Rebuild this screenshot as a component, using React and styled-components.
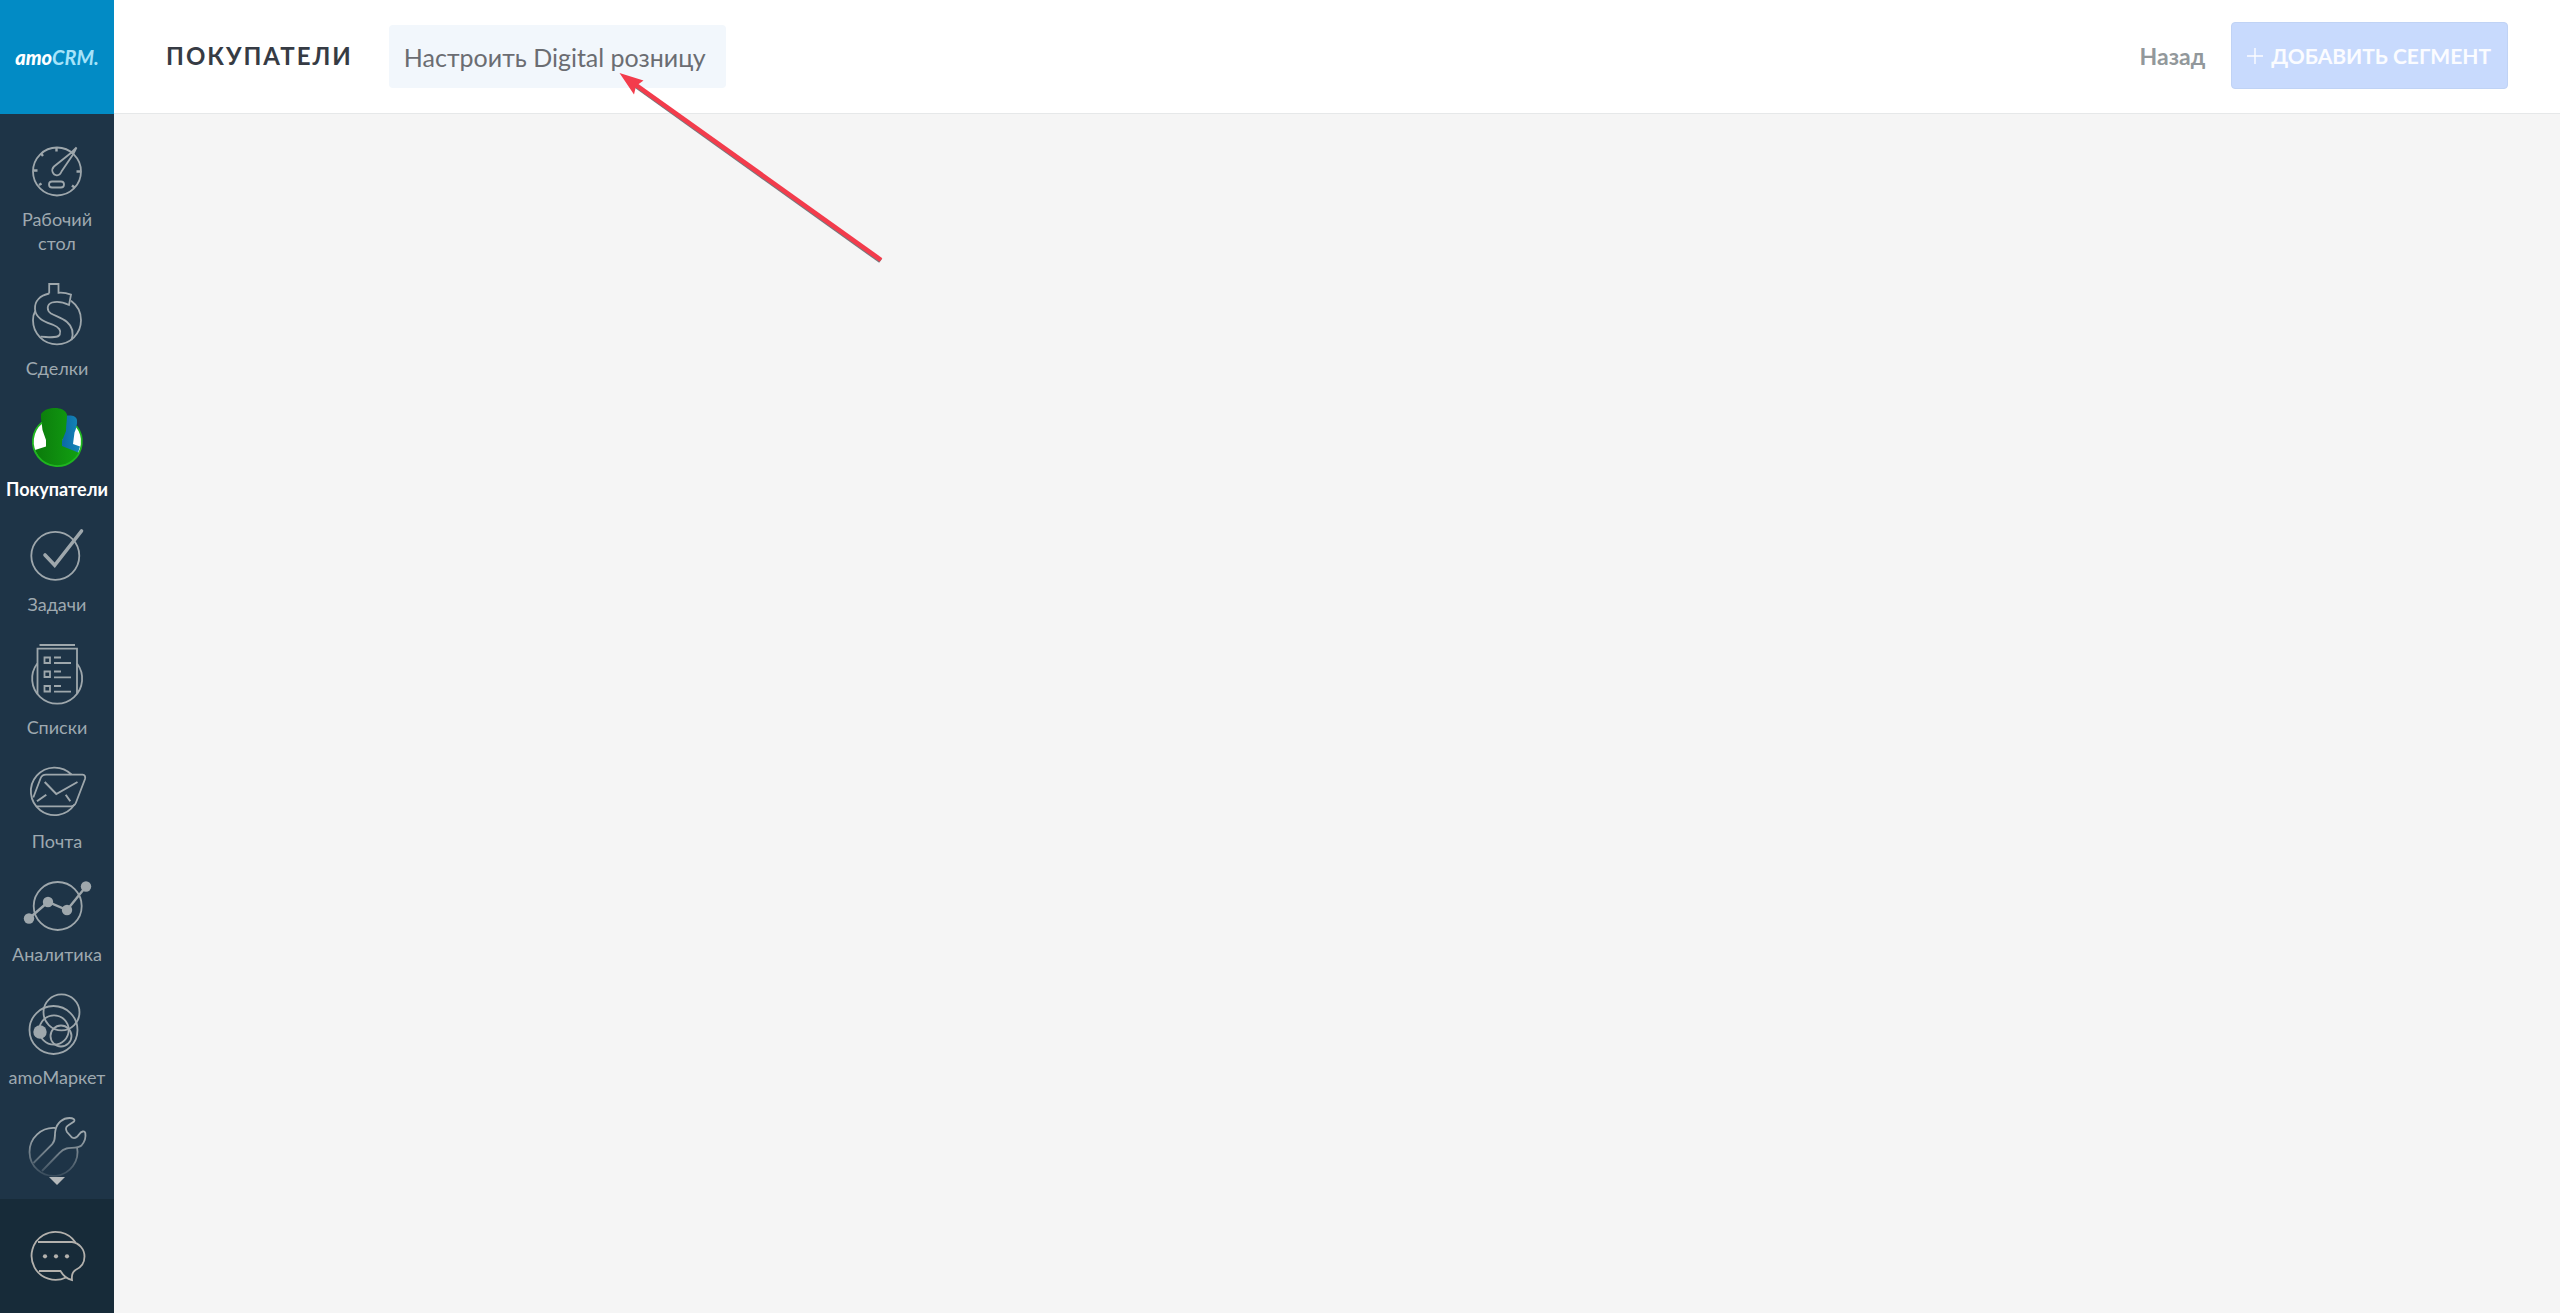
import React from "react";
import styled, { createGlobalStyle, css } from "styled-components";

const GlobalStyle = createGlobalStyle`
  *, *::before, *::after { box-sizing: border-box; }
  body {
    margin: 0;
    font-family: Lato, "Open Sans", sans-serif;
    background: #f5f5f5;
  }
`;

const Page = styled.div`
  display: flex;
  height: 100vh;
  overflow: hidden;
`;

const Sidebar = styled.aside`
  flex: none;
  display: flex;
  flex-direction: column;
  width: 114px;
  background: #1e3447;
`;

const Logo = styled.a`
  flex: none;
  display: flex;
  align-items: center;
  justify-content: center;
  height: 114px;
  background: #028bc5;
  color: #fff;
  font-size: 20px;
  line-height: 24px;
  font-weight: 900;
  font-style: italic;
  text-decoration: none;
`;

const LogoAccent = styled.span`
  color: #a5e3fa;
  font-weight: 700;
`;

const NavArea = styled.div`
  position: relative;
  flex: 1;
  min-height: 0;
  overflow: hidden;
`;

const Nav = styled.nav`
  display: flex;
  flex-direction: column;
  gap: 28px;
  padding-top: 32px;
`;

const NavItem = styled.a`
  display: flex;
  flex-direction: column;
  align-items: center;
  gap: 11px;
  color: #9ea9b0;
  font-size: 18px;
  line-height: 24px;
  text-align: center;
  text-decoration: none;
  ${(p) =>
    p.$active &&
    css`
      color: #fff;
      font-weight: 700;
    `}
`;

const Icon = styled.svg`
  display: block;
  flex: none;
  fill: none;
  stroke: ${(p) => p.$tone};
  stroke-width: 1.8;
`;

const NavFade = styled.div`
  position: absolute;
  inset: auto 0 0;
  display: flex;
  justify-content: center;
  align-items: flex-end;
  height: 64px;
  padding-bottom: 14px;
  background: linear-gradient(rgba(30, 52, 71, 0), #1e3447 80%);
`;

const MoreButton = styled.button`
  width: 16px;
  height: 8px;
  padding: 0;
  border: 0;
  background: #b5b9bb;
  clip-path: polygon(0 0, 100% 0, 50% 100%);
`;

const ChatButton = styled.button`
  flex: none;
  display: flex;
  align-items: center;
  justify-content: center;
  height: 114px;
  padding: 0;
  border: 0;
  background: #172b39;
`;

const Content = styled.div`
  flex: 1;
  min-width: 0;
  display: flex;
  flex-direction: column;
`;

const Header = styled.header`
  display: flex;
  align-items: center;
  height: 114px;
  padding: 0 52px;
  background: #fff;
  border-bottom: 1px solid #e6e8e9;
`;

const Title = styled.h1`
  margin: 0 36px 2px 0;
  color: #363b44;
  font-size: 24px;
  line-height: 32px;
  font-weight: 700;
  letter-spacing: 2px;
`;

const SetupButton = styled.button`
  height: 63px;
  padding: 0 20px 0 15px;
  border: 0;
  border-radius: 4px;
  background: #f2f7fc;
  color: #6b6d72;
  font-family: inherit;
  font-size: 25px;
  line-height: 32px;
`;

const Actions = styled.div`
  display: flex;
  align-items: center;
  gap: 26px;
  margin: 0 0 2px auto;
`;

const BackLink = styled.a`
  color: #92989b;
  font-size: 23px;
  line-height: 32px;
  font-weight: 700;
  text-decoration: none;
`;

const AddButton = styled.button`
  display: flex;
  align-items: center;
  gap: 8px;
  height: 67px;
  padding: 0 16px 0 15px;
  border: 1px solid #c0d3f5;
  border-radius: 4px;
  background: #c8dafd;
  color: #fbfcff;
  font-family: inherit;
  font-size: 21px;
  line-height: 32px;
  font-weight: 700;
`;

const Main = styled.main`
  flex: 1;
  background: #f5f5f5;
`;

const PointerArrow = styled.svg`
  position: absolute;
  left: 600px;
  top: 60px;
  pointer-events: none;
`;

const solid = { fill: "#9ea7ac", stroke: "none" };

const icons = {
  dashboard: {
    height: 50,
    art: (
      <>
        <circle cx="57" cy="25.5" r="24" />
        <path d="M76.5 1.5 71.5 6.5 54 20.5C50.5 24 53 29.5 57 29.3 59.5 29.2 60.8 27.5 61.5 25.5L73 8.5Z" />
        <path d="M56.5 2v3.5M34 24.5h3.5M76.5 25.5h4M41 7.5l2 2.5M39 39l2.5-1.5M74.5 41.5 72 39.5" strokeWidth="2.4" />
        <rect x="49" y="35.5" width="15" height="6" rx="3" />
      </>
    ),
  },
  leads: {
    height: 62,
    art: (
      <>
        <path d="M49.2 10.5V1H58.5V9.8C63 9.4 67 10.2 71 11.7L69 22C63 19 57 18 52 19.5 46.5 21.5 46.5 27.5 51 30.5 56 33.5 62 34.5 67 39 74 45 73.5 51 71.5 57" />
        <path d="M49.2 10.5C40 12.5 34.5 18 35 26 35.5 36 46 39 53.5 42 59 44.3 61.5 47.5 59.8 51.5 57.5 55.8 49 54 40.5 53.7" />
        <path d="M71 17.8C77.5 22.5 81 29.5 81 37.3A24 24 0 0 1 33 37.3C33 33 33.5 31 35.3 28" />
      </>
    ),
  },
  customers: {
    height: 58,
    art: (
      <>
        <defs>
          <linearGradient id="person" x1="0" x2="1">
            <stop offset="0" stopColor="#0b7a0b" />
            <stop offset="1" stopColor="#12a012" />
          </linearGradient>
          <linearGradient id="companion" x1="0" x2="1">
            <stop offset="0" stopColor="#0b66a5" />
            <stop offset="1" stopColor="#1587b8" />
          </linearGradient>
        </defs>
        <circle cx="57.3" cy="33.5" r="24.5" fill="#fff" stroke="none" />
        <path d="M66 7.8C71 6.8 76.5 8 77 12 77.5 16 76 21 74.5 24.5L73 36 80 38.5 78 45 61 39Z" fill="url(#companion)" stroke="none" />
        <path d="M41 6C44 1.5 50 0 55 0 60.5 0 65.5 2 67 6.5 67 13 66 17 66 23L62 33V38L79.5 45C76 53 67 58 57.3 58 47 58 38.5 52 35 42L46 38.5V32L42.5 22C42 16 40.5 11 41 6Z" fill="url(#person)" stroke="none" />
        <path d="M42 14.5A24.5 24.5 0 1 0 76.5 18.3" stroke="#1fb51f" />
      </>
    ),
  },
  tasks: {
    height: 52,
    art: (
      <>
        <circle cx="55.3" cy="26.8" r="24" />
        <path d="M45 26l9.7 10.3L81.5 2" strokeWidth="3.6" strokeLinecap="round" />
      </>
    ),
  },
  lists: {
    height: 60,
    art: (
      <>
        <path d="M39.5 1H75" />
        <path d="M37.5 50V4.7H77V50" />
        <path d="M37.3 19.5A25 25 0 1 0 77 19.5" />
        <path d="M44.5 13.5h5.5v5.5h-5.5zM44.5 27.5h5.5v5.5h-5.5zM44.5 42h5.5v5.5h-5.5z" />
        <path d="M54 13.5h7M54 19h17M54 27.5h7M54 33.3h17M54 42h7M54 47.7h17" />
      </>
    ),
  },
  mail: {
    height: 51,
    art: (
      <>
        <path d="M71.5 7.5A23.8 23.8 0 1 0 74.5 37.5" />
        <path d="M33.3 30.5 40.5 11.5Q42 7.7 46 7.7H82.5Q86 8 85 12L76 35.5Q74.5 39.3 70.5 39.3H36.5" />
        <path d="M44.7 15 56.3 27 77.5 15M37 34.3 46.3 27.7M65.7 27.7 70.3 34.3" strokeWidth="2" />
      </>
    ),
  },
  analytics: {
    height: 50,
    art: (
      <>
        <circle cx="57.7" cy="25" r="24" />
        <path d="M29 37.5 48 21 67 29 86 5.5" strokeWidth="2.4" />
        <g {...solid}>
          <circle cx="29" cy="37.5" r="5.2" />
          <circle cx="48" cy="21" r="5.2" />
          <circle cx="67" cy="29" r="5.2" />
          <circle cx="86" cy="5.5" r="5.2" />
        </g>
      </>
    ),
  },
  market: {
    height: 60,
    art: (
      <>
        <circle cx="53.5" cy="36" r="24" />
        <circle cx="61.5" cy="18.3" r="18" />
        <circle cx="54" cy="36" r="14.7" />
        <circle cx="61" cy="42" r="10.5" />
        <circle cx="40" cy="38" r="6.7" {...solid} />
      </>
    ),
  },
  settings: {
    height: 60,
    art: (
      <>
        <path d="M55.5 11A24 24 0 1 0 77 30" />
        <path d="M33.5 46 52 27.5C56.5 22.5 54 19 55.5 13 57 5.5 63 1 69.5 1 73 1 75.5 2.5 74 4.5L68 8.5C65.5 10 65.5 12.5 67 15L72 20.5C74.5 22 77 20.5 79 17.5 81.5 14 84.5 13.5 85.3 16 86 20 84.5 25 81.5 28.5 78 31.5 71 30.5 66.5 31.5 62 32.5 60 35.5 58 37.5L42 54" />
      </>
    ),
  },
  chat: {
    height: 50,
    art: (
      <>
        <path d="M75.5 11.5A24 24 0 1 0 66 46.5" />
        <path d="M38 11H72C79.5 12 84.5 18.5 84.5 25.5 84.5 31.5 81 36.5 75.5 39 72.5 41 71.5 45 72 49 67 48 64 46 60.5 40H39" />
        <g fill="#b3b1ad" stroke="none">
          <circle cx="45" cy="25.3" r="2.1" />
          <circle cx="56" cy="25.3" r="2.1" />
          <circle cx="67" cy="25.3" r="2.1" />
        </g>
      </>
    ),
  },
};

function Glyph({ name, tone = "#9ea7ac" }) {
  const { height, art } = icons[name];
  return (
    <Icon $tone={tone} width="114" height={height} viewBox={`0 0 114 ${height}`} overflow="visible" aria-hidden="true">
      {art}
    </Icon>
  );
}

const sections = [
  { icon: "dashboard", label: <>Рабочий<br />стол</> },
  { icon: "leads", label: "Сделки" },
  { icon: "customers", label: "Покупатели", active: true },
  { icon: "tasks", label: "Задачи" },
  { icon: "lists", label: "Списки" },
  { icon: "mail", label: "Почта" },
  { icon: "analytics", label: "Аналитика" },
  { icon: "market", label: "amoМаркет" },
  { icon: "settings" },
];

export default function App() {
  return (
    <>
      <GlobalStyle />
      <Page>
        <Sidebar>
          <Logo href="#">
            amo<LogoAccent>CRM.</LogoAccent>
          </Logo>
          <NavArea>
            <Nav>
              {sections.map(({ icon, label, active }) => (
                <NavItem key={icon} href="#" $active={active}>
                  <Glyph name={icon} />
                  {label && <span>{label}</span>}
                </NavItem>
              ))}
            </Nav>
            <NavFade>
              <MoreButton type="button" />
            </NavFade>
          </NavArea>
          <ChatButton type="button">
            <Glyph name="chat" tone="#b3b1ad" />
          </ChatButton>
        </Sidebar>
        <Content>
          <Header>
            <Title>ПОКУПАТЕЛИ</Title>
            <SetupButton type="button">Настроить Digital розницу</SetupButton>
            <Actions>
              <BackLink href="#">Назад</BackLink>
              <AddButton type="button">
                <svg width="16" height="16" viewBox="0 0 16 16" stroke="currentColor" strokeWidth="1.4">
                  <path d="M8 0v16M0 8h16" />
                </svg>
                ДОБАВИТЬ СЕГМЕНТ
              </AddButton>
            </Actions>
          </Header>
          <Main />
        </Content>
      </Page>
      <PointerArrow width="300" height="210" viewBox="0 0 300 210" aria-hidden="true">
        <path d="M36 26 280.500 201" stroke="#77797d" strokeWidth="4.600" />
        <path d="M36 25 281 200" stroke="#f33c4c" strokeWidth="4.600" />
        <path d="M19.500 13 43.500 20.500 36 26 34 34.500Z" fill="#f33c4c" />
      </PointerArrow>
    </>
  );
}
